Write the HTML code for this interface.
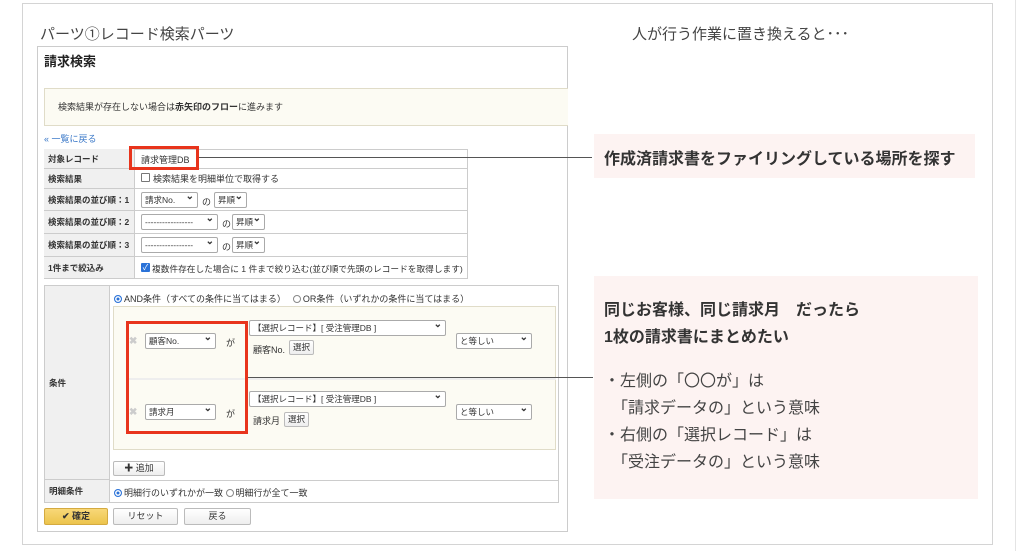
<!DOCTYPE html>
<html><head><meta charset="utf-8"><style>
*{margin:0;padding:0;box-sizing:border-box}
body{width:1018px;height:551px;background:#fff;position:relative;overflow:hidden;font-family:"Liberation Sans","Noto Sans CJK JP",sans-serif;color:#333}
.a{position:absolute}
.t{font-size:9px;white-space:nowrap}
.lbl{background:#f0f0f0;font-weight:bold;font-size:8.5px;padding-left:4px;display:flex;align-items:center;border-bottom:1px solid #ccc;border-right:1px solid #ccc}
.sel{position:absolute;background:#fff;border:1px solid #aaa;border-radius:2px;font-size:8.5px;padding:2px 3px;height:16px;line-height:11px}
.sel:after{content:"⌄";position:absolute;right:3px;top:-2px;font-size:10px;font-weight:bold}
.btn{position:absolute;border:1px solid #bbb;border-radius:2px;background:linear-gradient(#fff,#eee);font-size:9px;text-align:center}
.rad{display:inline-block;width:8px;height:8px;border-radius:50%;border:1px solid #888;vertical-align:-1px;margin-right:2px}
.rad.on{border-color:#2a72d8;box-shadow:inset 0 0 0 1.5px #fff;background:#2a72d8}
</style></head><body>
<div class="a" style="left:22px;top:3px;width:971px;height:542px;border:1px solid #d4d4d4"></div>
<div class="a" style="left:1015px;top:0;width:1px;height:551px;background:#e4e4e4"></div>
<div class="a" style="left:40px;top:23px;font-size:15px;color:#444;white-space:nowrap">パーツ①レコード検索パーツ</div>
<div class="a" style="left:632px;top:23px;font-size:15px;color:#444;white-space:nowrap">人が行う作業に置き換えると･･･</div>

<div class="a" style="left:37px;top:46px;width:531px;height:486px;border:1px solid #ccc"></div>
<div class="a" style="left:44px;top:51px;font-size:13px;font-weight:bold;color:#222">請求検索</div>
<div class="a" style="left:44px;top:88px;width:524px;height:38px;background:#fcfbf3;border:1px solid #e0dcc8;border-right:none"></div>
<div class="a t" style="left:58px;top:100px">検索結果が存在しない場合は<b>赤矢印のフロー</b>に進みます</div>
<div class="a t" style="left:44px;top:132px;color:#3a78c8">« 一覧に戻る</div>

<div class="a" style="left:44px;top:149px;width:424px;height:130px;border:1px solid #ccc;border-bottom:none;border-right:1px solid #ccc"></div>
<div class="a lbl" style="left:44px;top:149px;width:91px;height:20px">対象レコード</div>
<div class="a lbl" style="left:44px;top:169px;width:91px;height:20px">検索結果</div>
<div class="a lbl" style="left:44px;top:189px;width:91px;height:22px">検索結果の並び順：1</div>
<div class="a lbl" style="left:44px;top:211px;width:91px;height:23px">検索結果の並び順：2</div>
<div class="a lbl" style="left:44px;top:234px;width:91px;height:23px">検索結果の並び順：3</div>
<div class="a lbl" style="left:44px;top:257px;width:91px;height:22px">1件まで絞込み</div>
<div class="a" style="left:135px;top:168px;width:333px;border-top:1px solid #ccc"></div>
<div class="a" style="left:135px;top:188px;width:333px;border-top:1px solid #ccc"></div>
<div class="a" style="left:135px;top:210px;width:333px;border-top:1px solid #ccc"></div>
<div class="a" style="left:135px;top:233px;width:333px;border-top:1px solid #ccc"></div>
<div class="a" style="left:135px;top:256px;width:333px;border-top:1px solid #ccc"></div>
<div class="a" style="left:44px;top:278px;width:424px;border-top:1px solid #ccc"></div>
<div class="a t" style="left:141px;top:153px">請求管理DB</div>
<div class="a" style="left:141px;top:173px;width:9px;height:9px;border:1px solid #777;border-radius:1px"></div>
<div class="a t" style="left:153px;top:172px">検索結果を明細単位で取得する</div>
<div class="sel" style="left:141px;top:192px;width:57px">請求No.</div><div class="a t" style="left:202px;top:195px">の</div><div class="sel" style="left:214px;top:192px;width:33px">昇順</div>
<div class="sel" style="left:141px;top:214px;width:77px">-----------------</div><div class="a t" style="left:222px;top:217px">の</div><div class="sel" style="left:232px;top:214px;width:33px">昇順</div>
<div class="sel" style="left:141px;top:237px;width:77px">-----------------</div><div class="a t" style="left:222px;top:240px">の</div><div class="sel" style="left:232px;top:237px;width:33px">昇順</div>
<div class="a" style="left:141px;top:263px;width:9px;height:9px;background:#2a72d8;border-radius:1px;color:#fff;font-size:8px;line-height:9px;text-align:center">✓</div>
<div class="a t" style="left:152px;top:262px;font-size:8.7px">複数件存在した場合に 1 件まで絞り込む(並び順で先頭のレコードを取得します)</div>
<div class="a" style="left:129px;top:146px;width:70px;height:24px;border:3px solid #e8341c"></div>

<div class="a" style="left:44px;top:285px;width:515px;height:218px;border:1px solid #ccc"></div>
<div class="a lbl" style="left:45px;top:286px;width:65px;height:194px">条件</div>
<div class="a lbl" style="left:45px;top:480px;width:65px;height:22px;border-bottom:none">明細条件</div>
<div class="a" style="left:110px;top:480px;width:448px;border-top:1px solid #ccc"></div>
<div class="a t" style="left:114px;top:292px"><span class="rad on"></span>AND条件（すべての条件に当てはまる）　 <span class="rad"></span>OR条件（いずれかの条件に当てはまる）</div>
<div class="a" style="left:113px;top:306px;width:443px;height:144px;background:#fcfbf3;border:1px solid #e0dcc8"></div>
<div class="a" style="left:126px;top:378px;width:430px;border-top:2px solid #eee"></div>
<div class="a" style="left:129px;top:336px;color:#ccc;font-size:10px;font-weight:bold">✖</div>
<div class="sel" style="left:145px;top:333px;width:71px">顧客No.</div><div class="a t" style="left:226px;top:336px">が</div>
<div class="sel" style="left:249px;top:320px;width:197px">【選択レコード】[ 受注管理DB ]</div>
<div class="a t" style="left:253px;top:343px">顧客No.</div><div class="btn" style="left:289px;top:340px;width:25px;height:15px;line-height:13px;font-size:8.5px">選択</div>
<div class="sel" style="left:456px;top:333px;width:76px">と等しい</div>
<div class="a" style="left:129px;top:407px;color:#ccc;font-size:10px;font-weight:bold">✖</div>
<div class="sel" style="left:145px;top:404px;width:71px">請求月</div><div class="a t" style="left:226px;top:407px">が</div>
<div class="sel" style="left:249px;top:391px;width:197px">【選択レコード】[ 受注管理DB ]</div>
<div class="a t" style="left:253px;top:414px">請求月</div><div class="btn" style="left:284px;top:412px;width:25px;height:15px;line-height:13px;font-size:8.5px">選択</div>
<div class="sel" style="left:456px;top:404px;width:76px">と等しい</div>
<div class="a" style="left:126px;top:321px;width:122px;height:113px;border:3px solid #e8341c"></div>
<div class="btn" style="left:113px;top:461px;width:52px;height:15px;line-height:13px">✚ 追加</div>
<div class="a t" style="left:114px;top:486px"><span class="rad on"></span>明細行のいずれかが一致 <span class="rad"></span>明細行が全て一致</div>
<div class="btn" style="left:44px;top:508px;width:64px;height:17px;line-height:15px;background:linear-gradient(#f8d878,#ecc44c);border-color:#d4aa40;font-weight:bold">✔ 確定</div>
<div class="btn" style="left:113px;top:508px;width:65px;height:17px;line-height:15px">リセット</div>
<div class="btn" style="left:184px;top:508px;width:67px;height:17px;line-height:15px">戻る</div>

<div class="a" style="left:199px;top:157px;width:393px;border-top:1px solid #555"></div>
<div class="a" style="left:248px;top:377px;width:345px;border-top:1px solid #555"></div>

<div class="a" style="left:594px;top:134px;width:381px;height:44px;background:#fdf3f2"></div>
<div class="a" style="left:604px;top:145px;font-size:16px;font-weight:bold;color:#333;white-space:nowrap">作成済請求書をファイリングしている場所を探す</div>
<div class="a" style="left:594px;top:276px;width:384px;height:223px;background:#fdf3f2"></div>
<div class="a" style="left:604px;top:297px;font-size:16px;font-weight:bold;line-height:27px;color:#333;white-space:nowrap">同じお客様、同じ請求月　だったら<br>1枚の請求書にまとめたい</div>
<div class="a" style="left:604px;top:368px;font-size:16px;line-height:27px;color:#444;white-space:nowrap">・左側の「〇〇が」は<br>　「請求データの」という意味<br>・右側の「選択レコード」は<br>　「受注データの」という意味</div>
</body></html>
